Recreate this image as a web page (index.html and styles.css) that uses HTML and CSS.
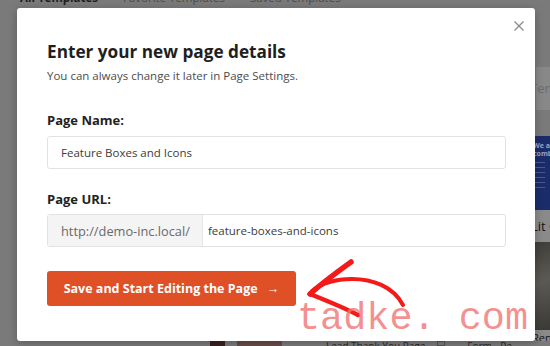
FILE: index.html
```html
<!DOCTYPE html>
<html lang="en">
<head>
  <meta charset="UTF-8" />
  <meta name="viewport" content="width=device-width, initial-scale=1" />
  <title>New Page Details</title>
  <link rel="stylesheet" href="styles.css">
</head>
<body>
  <div class="backdrop">
    <nav class="tabs">
      <span class="tab active">All Templates</span>
      <span class="tab">Favorite Templates</span>
      <span class="tab">Saved Templates</span>
    </nav>
    <div class="library">
      <div class="grid-space"></div>
      <div class="card-col">
        <div class="search">Templat</div>
        <div class="thumb blue">
          <span class="thumb-title">We are<br>combi</span>
          <span class="thumb-lines"></span>
        </div>
        <div class="card-name">Lit Co</div>
        <div class="thumb photo"></div>
        <div class="card-name small">Renai</div>
      </div>
    </div>
    <div class="bottom-row">
      <span class="chip red"></span>
      <span class="chip pill"></span>
      <span class="bottom-text">Lead Thank You Page</span>
      <span class="chip box"></span>
      <span class="bottom-text">Form - Re</span>
    </div>
  </div>

  <section class="modal">
    <button class="close" title="Close">
      <svg width="10" height="10" viewBox="0 0 10 10"><path d="M0.5 0.5L9.5 9.5M9.5 0.5L0.5 9.5" stroke="#8a8a8a" stroke-width="1.3" fill="none"/></svg>
    </button>
    <h2 class="modal-title">Enter your new page details</h2>
    <p class="modal-sub">You can always change it later in Page Settings.</p>

    <label class="field-label">Page Name:</label>
    <div class="field">
      <span class="field-value">Feature Boxes and Icons</span>
    </div>

    <label class="field-label url">Page URL:</label>
    <div class="field split">
      <span class="prefix">http://demo-inc.local/</span>
      <span class="field-value">feature-boxes-and-icons</span>
    </div>

    <button class="save-btn">Save and Start Editing the Page <span class="arrow">&rarr;</span></button>
  </section>

  <svg class="hand-arrow" width="130" height="70" viewBox="290 255 130 70">
    <path d="M351 262 C340 270 322 283 310 294" stroke="#f51a1a" stroke-width="5.5" stroke-linecap="round" fill="none"/>
    <path d="M310 294 C325 300 345 308 358 315" stroke="#f51a1a" stroke-width="4.5" stroke-linecap="round" fill="none"/>
    <path d="M312 291 C322 283 335 279 352 279 C372 279 393 286 403 305" stroke="#f51a1a" stroke-width="4" stroke-linecap="round" fill="none"/>
  </svg>

  <div class="watermark">tadke. com</div>
</body>
</html>
```

FILE: styles.css
```css
* {
  box-sizing: border-box;
}
body {
  margin: 0;
  width: 550px;
  height: 346px;
  overflow: hidden;
  position: relative;
  background: #7a7a7a;
  font-family: 'Open Sans', sans-serif;
}

/* page behind the overlay */
.backdrop {
  height: 346px;
  display: flex;
  flex-direction: column;
}
.tabs {
  display: flex;
  gap: 25px;
  padding-left: 20px;
  margin-top: -10px;
  height: 16px;
  font-size: 11.5px;
  line-height: 16px;
  color: #4a4a4a;
}
.tab.active {
  color: #1e1e1e;
  font-weight: 700;
}
.library {
  flex: 1;
  display: flex;
  min-height: 0;
}
.grid-space {
  flex: 1;
}
.card-col {
  width: 15px;
  padding-top: 61px;
  display: flex;
  flex-direction: column;
  overflow: hidden;
  white-space: nowrap;
}
.search {
  flex: none;
  height: 43px;
  margin-left: 1px;
  background: #888;
  color: #6e6e6e;
  font-size: 13px;
  line-height: 43px;
  text-indent: -6px;
}
.thumb.blue {
  flex: none;
  margin-top: 26px;
  height: 74px;
  background: #1b2c6a;
  color: #9aa3c4;
  padding: 6px 0 0 0;
  font-size: 7px;
  line-height: 8px;
  font-weight: 700;
}
.thumb-title {
  display: block;
  margin-left: -2px;
}
.thumb-lines {
  display: block;
  margin-top: 4px;
  width: 10px;
  height: 26px;
  background: repeating-linear-gradient(#4a5a90 0 1px, transparent 1px 5px);
}
.card-name {
  flex: none;
  height: 32px;
  background: #8a8a8a;
  color: #151515;
  font-size: 13px;
  line-height: 32px;
  text-indent: -4px;
}
.thumb.photo {
  flex: none;
  height: 88px;
  background: linear-gradient(160deg, #3e3d38 0%, #5c5a55 45%, #3a3935 100%);
}
.card-name.small {
  font-size: 11px;
  height: 16px;
  line-height: 16px;
  text-indent: -3px;
}
.bottom-row {
  height: 5px;
  flex: none;
  display: flex;
  align-items: flex-start;
  gap: 12px;
  padding-left: 210px;
  font-size: 10px;
  line-height: 10px;
  color: #2a2a2a;
  overflow: hidden;
}
.chip {
  height: 5px;
}
.chip.red {
  width: 15px;
  background: #3a1f20;
}
.chip.pill {
  width: 45px;
  background: #6a4a4a;
  margin-right: 32px;
}
.chip.box {
  width: 8px;
  border: 1px solid #555;
  margin: 0 10px 0 0;
}

/* modal */
.modal {
  position: absolute;
  left: 17px;
  top: 8px;
  width: 518px;
  height: 333px;
  background: #fff;
  border-radius: 3px;
  padding: 32px 29px 0 30px;
  box-shadow: 0 2px 8px rgba(0, 0, 0, 0.25);
  display: flex;
  flex-direction: column;
}
.close {
  position: absolute;
  top: 13px;
  right: 11px;
  width: 10px;
  height: 10px;
  padding: 0;
  border: none;
  background: none;
  display: flex;
}
.modal-title {
  margin: 0;
  font-size: 17.2px;
  line-height: 24px;
  font-weight: 700;
  color: #1f1f1f;
}
.modal-sub {
  margin: 4px 0 0;
  font-size: 11.5px;
  line-height: 16px;
  color: #4c4c4c;
}
.field-label {
  margin-top: 28px;
  font-size: 13px;
  line-height: 16px;
  font-weight: 700;
  color: #222;
}
.field-label.url {
  margin-top: 22px;
}
.field {
  margin-top: 8px;
  height: 33px;
  border: 1px solid #e2e2e2;
  border-radius: 3px;
  display: flex;
  align-items: center;
  font-size: 11.5px;
  color: #3c3c3c;
}
.field.split {
  margin-top: 7px;
}
.field-value {
  padding-left: 13px;
}
.prefix {
  align-self: stretch;
  width: 155px;
  background: #f4f4f4;
  border-right: 1px solid #e6e6e6;
  color: #6a6a6a;
  font-size: 12.8px;
  padding-left: 13px;
  display: flex;
  align-items: center;
}
.prefix + .field-value {
  padding-left: 5px;
}
.save-btn {
  margin-top: 24px;
  align-self: flex-start;
  width: 249px;
  height: 35px;
  border: none;
  border-radius: 3px;
  background: #df5027;
  color: #fff;
  font-family: 'Open Sans', sans-serif;
  font-size: 12.5px;
  font-weight: 700;
  padding: 0;
}
.save-btn .arrow {
  margin-left: 6px;
}

/* overlays on the screenshot */
.hand-arrow {
  position: absolute;
  left: 290px;
  top: 255px;
}
.watermark {
  position: absolute;
  left: 297px;
  top: 294px;
  font-family: 'Liberation Mono', monospace;
  font-size: 38.5px;
  line-height: 50px;
  color: rgba(240, 115, 115, 0.8);
  white-space: nowrap;
}
```
